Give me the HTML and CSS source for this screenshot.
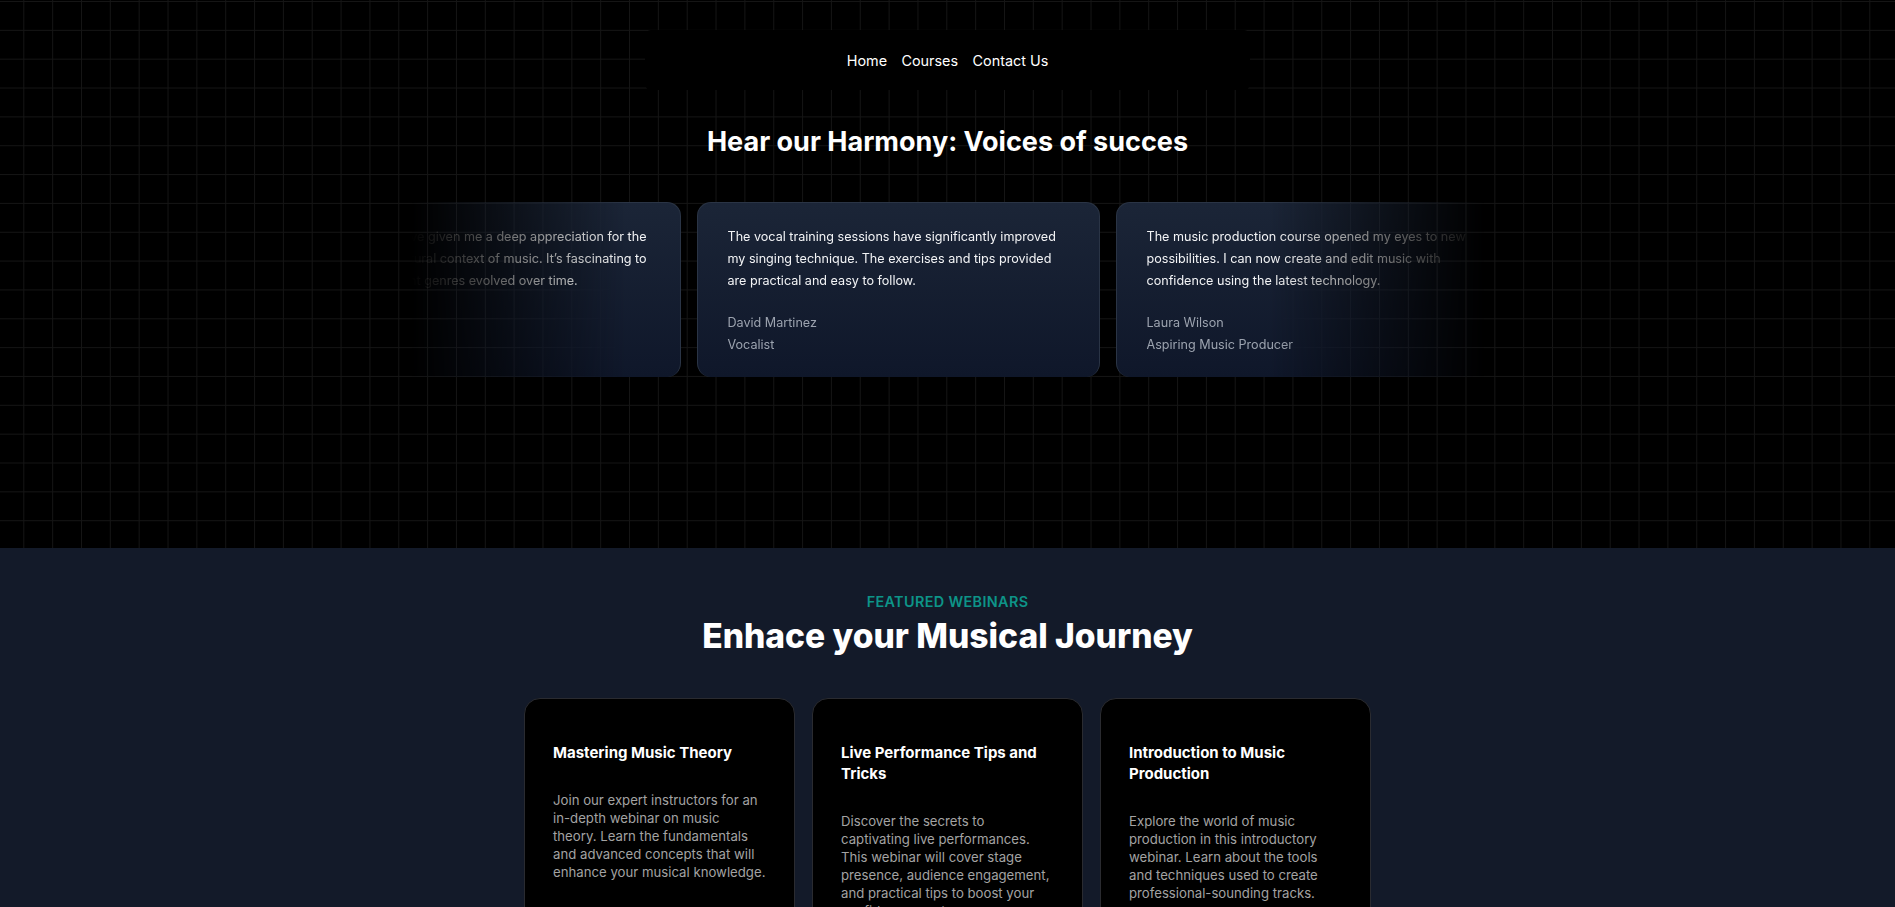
FILE: index.html
```html
<!DOCTYPE html>
<html lang="en">
<head>
<meta charset="utf-8">
<title>Music School</title>
<link rel="stylesheet" href="styles.css">
</head>
<body>
<section class="hero">
  <nav class="nav">
    <a class="nav-link" href="#">Home</a>
    <a class="nav-link" href="#">Courses</a>
    <a class="nav-link" href="#">Contact Us</a>
  </nav>
  <h1 class="hero-title">Hear our Harmony: Voices of succes</h1>
  <div class="scroller">
    <ul class="scroller-list">
      <li class="t-card">
        <p class="t-quote">Music classes have given me a deep appreciation for the historical and cultural context of music. It’s fascinating to learn how different genres evolved over time.</p>
        <div class="t-author">
          <span class="t-name">Emily Clark</span>
          <span class="t-role">Student</span>
        </div>
      </li>
      <li class="t-card">
        <p class="t-quote">The vocal training sessions have significantly improved my singing technique. The exercises and tips provided are practical and easy to follow.</p>
        <div class="t-author">
          <span class="t-name">David Martinez</span>
          <span class="t-role">Vocalist</span>
        </div>
      </li>
      <li class="t-card">
        <p class="t-quote">The music production course opened my eyes to new possibilities. I can now create and edit music with confidence using the latest technology.</p>
        <div class="t-author">
          <span class="t-name">Laura Wilson</span>
          <span class="t-role">Aspiring Music Producer</span>
        </div>
      </li>
      <li class="t-card">
        <p class="t-quote">Learning guitar here has been a wonderful journey. The instructors are patient and the lessons are well structured.</p>
        <div class="t-author">
          <span class="t-name">Michael Chen</span>
          <span class="t-role">Guitar Student</span>
        </div>
      </li>
    </ul>
  </div>
</section>

<section class="webinars">
  <p class="eyebrow">Featured Webinars</p>
  <h2 class="section-title">Enhace your Musical Journey</h2>
  <div class="w-grid">
    <article class="w-card">
      <h3 class="w-title">Mastering Music Theory</h3>
      <p class="w-desc">Join our expert instructors for an in-depth webinar on music theory. Learn the fundamentals and advanced concepts that will enhance your musical knowledge.</p>
    </article>
    <article class="w-card">
      <h3 class="w-title">Live Performance Tips and Tricks</h3>
      <p class="w-desc">Discover the secrets to captivating live performances. This webinar will cover stage presence, audience engagement, and practical tips to boost your confidence on stage.</p>
    </article>
    <article class="w-card">
      <h3 class="w-title">Introduction to Music Production</h3>
      <p class="w-desc">Explore the world of music production in this introductory webinar. Learn about the tools and techniques used to create professional-sounding tracks.</p>
    </article>
  </div>
</section>
</body>
</html>
```

FILE: styles.css
```css
* {
  box-sizing: border-box;
}

html, body {
  margin: 0;
  padding: 0;
}

body {
  background: #131a29;
  font-family: "Inter", "Noto Sans", sans-serif;
  color: #ffffff;
}

/* ---------- hero with grid ---------- */
.hero {
  height: 548px;
  background-color: #000000;
  background-image:
    linear-gradient(to right, #151515 1px, transparent 1px),
    linear-gradient(to bottom, #151515 1px, transparent 1px);
  background-size: 28.85px 28.85px;
  background-position: 23.3px 1px;
  padding-top: 30px;
  display: flex;
  flex-direction: column;
  align-items: center;
  overflow: hidden;
}

.nav {
  width: 605px;
  height: 60px;
  padding-top: 2px;
  background: #000000;
  border-radius: 6px;
  display: flex;
  justify-content: center;
  align-items: center;
  gap: 14.4px;
}

.nav-link {
  color: #ffffff;
  text-decoration: none;
  font-size: 14.4px;
  line-height: 21.6px;
}

.hero-title {
  margin: 33.5px 0 0;
  font-size: 27px;
  line-height: 36px;
  font-weight: 700;
  text-align: center;
  color: #ffffff;
}

.scroller {
  width: 1072px;
  margin-top: 28px;
  overflow: hidden;
  -webkit-mask-image: linear-gradient(to right, transparent, #fff 20%, #fff 80%, transparent);
  mask-image: linear-gradient(to right, transparent, #fff 20%, #fff 80%, transparent);
}

.scroller-list {
  list-style: none;
  margin: 0;
  padding: 14.4px 0;
  display: flex;
  flex-wrap: nowrap;
  align-items: flex-start;
  gap: 16px;
  width: max-content;
  transform: translateX(-134px);
}

.t-card {
  flex-shrink: 0;
  width: 403px;
  border: 1px solid #2a3445;
  border-bottom: 0;
  border-radius: 14px;
  background: linear-gradient(180deg, #1b2537, #0f172a);
  padding: 23px 30px 21px;
}

.t-quote {
  margin: 0;
  font-size: 12.6px;
  line-height: 22px;
  color: #f3f4f6;
}

.t-author {
  margin-top: 20px;
  display: flex;
  flex-direction: column;
}

.t-name,
.t-role {
  font-size: 12.6px;
  line-height: 22px;
  color: #9ca3af;
}

/* ---------- webinars ---------- */
.webinars {
  background: #131a29;
  padding: 43px 0 80px;
  display: flex;
  flex-direction: column;
  align-items: center;
}

.eyebrow {
  margin: 0;
  font-size: 14.4px;
  line-height: 21.6px;
  font-weight: 600;
  letter-spacing: 0.025em;
  text-transform: uppercase;
  color: #0d9488;
}

.section-title {
  margin: 5.7px 0 0;
  font-size: 33.6px;
  line-height: 36px;
  font-weight: 800;
  color: #ffffff;
}

.w-grid {
  margin-top: 44px;
  display: grid;
  grid-template-columns: repeat(3, 271px);
  gap: 17px;
}

.w-card {
  background: #000000;
  border: 1px solid #2a2b30;
  border-radius: 16px;
  padding: 43px 27.7px 40px 28px;
  min-height: 300px;
}

.w-title {
  margin: 0;
  font-size: 15px;
  line-height: 21px;
  font-weight: 700;
  color: #ffffff;
}

.w-desc {
  margin: 28px 0 0;
  font-size: 13.2px;
  line-height: 18px;
  color: #a3a3a3;
}
```
